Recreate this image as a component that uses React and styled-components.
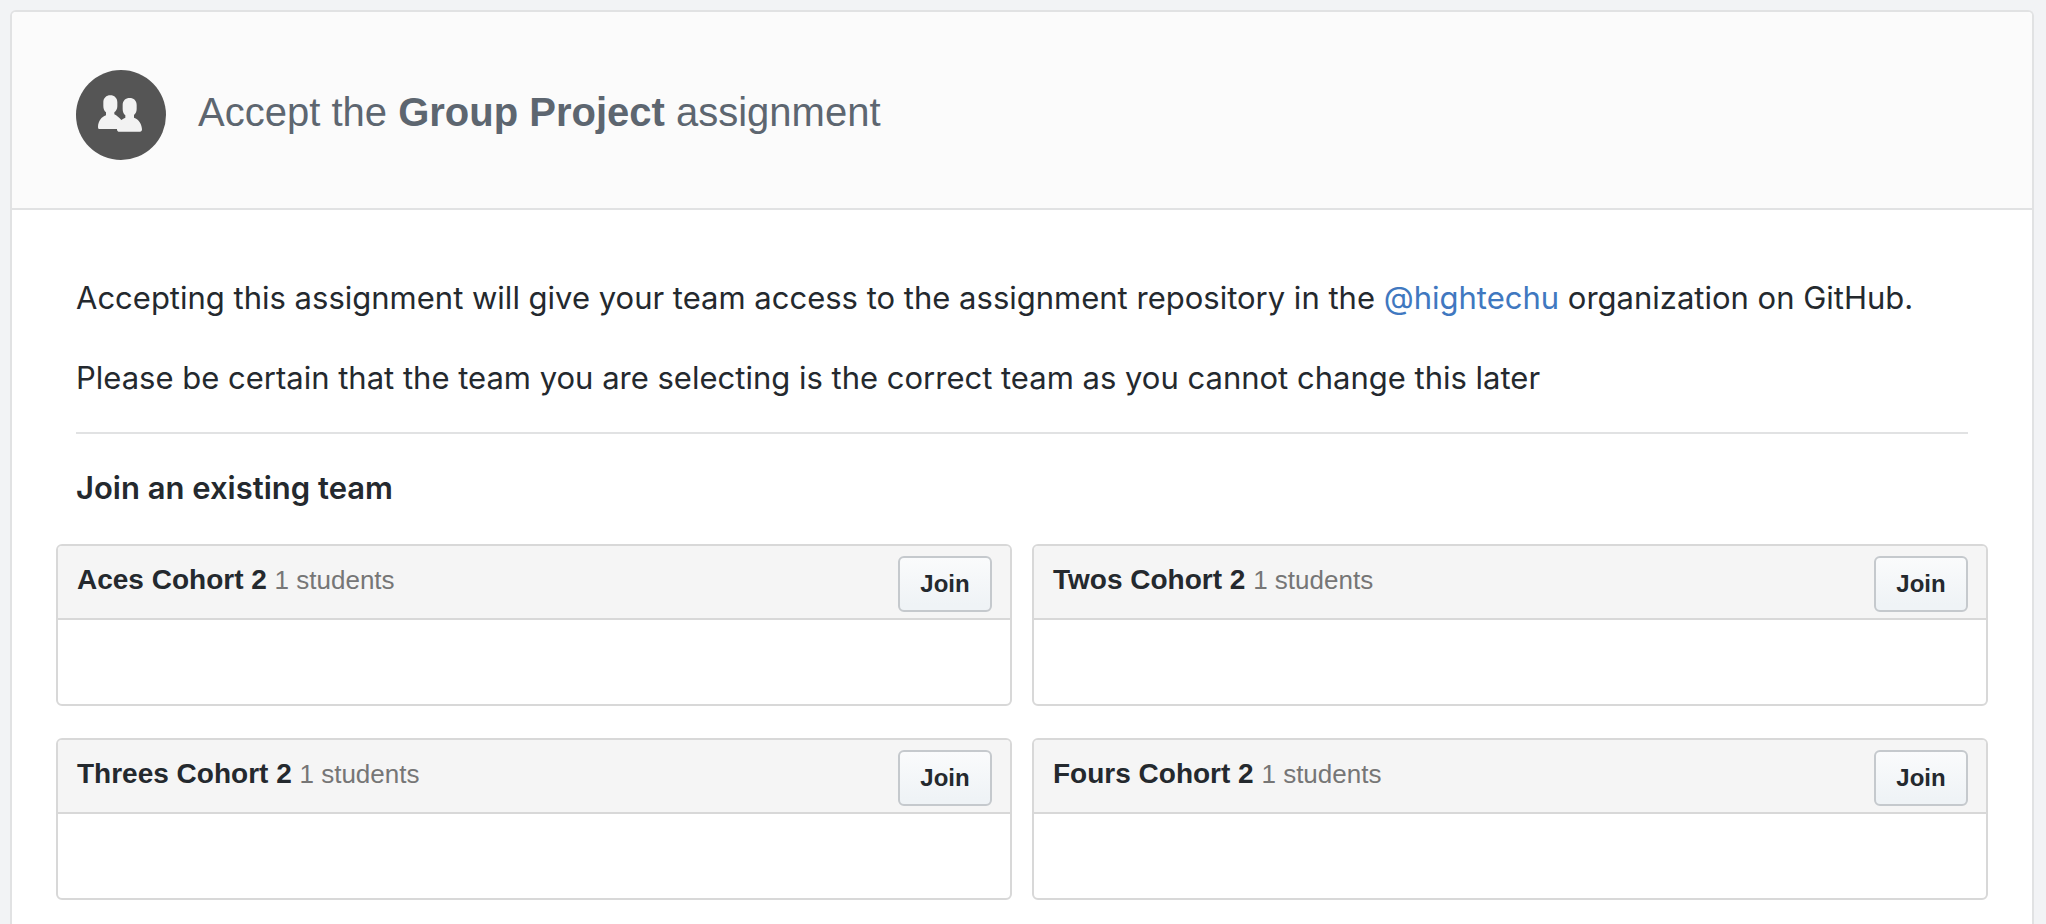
import React from "react";
import styled, { createGlobalStyle } from "styled-components";

const GlobalStyle = createGlobalStyle`
  *, *::before, *::after {
    box-sizing: border-box;
  }

  body {
    margin: 0;
    background: #f2f3f5;
    color: #24292e;
    font-family: "Liberation Sans", Arial, sans-serif;
  }
`;

const Page = styled.main`
  display: flex;
  flex-direction: column;
  min-height: 100vh;
  padding: 10px 12px 0 10px;
`;

const Panel = styled.section`
  flex: 1;
  background: #fff;
  border: 2px solid #e1e2e3;
  border-bottom: 0;
  border-radius: 6px 6px 0 0;
`;

const PanelHeader = styled.header`
  display: flex;
  align-items: flex-start;
  gap: 32px;
  padding: 58px 64px 48px;
  background: #fbfbfb;
  border-bottom: 2px solid #e1e2e3;
  border-radius: 4px 4px 0 0;
`;

const Badge = styled.svg`
  flex: none;
  width: 90px;
  height: 90px;
`;

const Title = styled.h1`
  margin: 0;
  color: #5d6670;
  font-size: 40px;
  font-weight: 400;
  line-height: 84px;
`;

const PanelBody = styled.div`
  padding: 64px 44px 20px;
`;

const Intro = styled.div`
  margin: 0 20px;
  padding-bottom: 30px;
  border-bottom: 2px solid #e1e2e3;
  font-family: Inter, sans-serif;
  font-size: 31px;
  line-height: 48px;
`;

const Paragraph = styled.p`
  margin: 0;

  & + & {
    margin-top: 32px;
  }
`;

const OrgLink = styled.a`
  color: #4078c0;
  text-decoration: none;
`;

const SectionTitle = styled.h2`
  margin: 30px 20px 32px;
  font-family: Inter, sans-serif;
  font-size: 31px;
  font-weight: 600;
  line-height: 48px;
`;

const TeamGrid = styled.div`
  display: grid;
  grid-template-columns: 1fr 1fr;
  gap: 32px 20px;
`;

const TeamCard = styled.article`
  border: 2px solid #d8d8d8;
  border-radius: 6px;
  background: #fff;
`;

const TeamHeader = styled.div`
  display: flex;
  justify-content: space-between;
  align-items: flex-start;
  padding: 10px 18px 6px 19px;
  background: #f5f5f5;
  border-bottom: 2px solid #d8d8d8;
  border-radius: 4px 4px 0 0;
`;

const TeamName = styled.h3`
  margin: 0;
  font-size: 28px;
  line-height: 48px;
`;

const StudentCount = styled.span`
  color: #767676;
  font-size: 26px;
  font-weight: 400;
`;

const TeamMembers = styled.div`
  height: 84px;
`;

const JoinButton = styled.button`
  min-width: 94px;
  padding: 0 20px;
  border: 2px solid #c5c9cd;
  border-radius: 6px;
  background: linear-gradient(#fafbfc, #eff3f6 90%);
  color: #24292e;
  font-family: inherit;
  font-size: 24px;
  font-weight: 700;
  line-height: 52px;
  cursor: pointer;
`;

const teams = [
  { name: "Aces Cohort 2", students: 1 },
  { name: "Twos Cohort 2", students: 1 },
  { name: "Threes Cohort 2", students: 1 },
  { name: "Fours Cohort 2", students: 1 },
];

function GroupBadge() {
  return (
    <Badge viewBox="48 60 270 270" aria-hidden="true">
      <circle cx="183" cy="195" r="135" fill="#555" />
      <g fill="#f2f2f2">
        <path d="M151 136C163 136 172 144 172 157V169C172 177 168 183 163 187V193C170 197 178 203 184 210C180 218 172 226 172 237H119C115 237 114 234 114 230C115 213 124 201 138 196V187C133 183 130 176 130 168V157C130 144 139 136 151 136Z" />
        <path d="M209 144C221 144 230 152 230 165V177C230 185 227 191 222 195V203C237 209 245 221 246 238C246 243 244 245 240 245H178C174 245 172 243 171 239V215L184 210C188 207 192 205 196 203V196C191 192 188 185 188 177V165C188 152 197 144 209 144Z" />
      </g>
    </Badge>
  );
}

function Team({ name, students }) {
  return (
    <TeamCard>
      <TeamHeader>
        <TeamName>
          {name} <StudentCount>{students} students</StudentCount>
        </TeamName>
        <JoinButton type="button">Join</JoinButton>
      </TeamHeader>
      <TeamMembers />
    </TeamCard>
  );
}

export default function App() {
  return (
    <>
      <GlobalStyle />
      <Page>
        <Panel>
          <PanelHeader>
            <GroupBadge />
            <Title>
              Accept the <strong>Group Project</strong> assignment
            </Title>
          </PanelHeader>
          <PanelBody>
            <Intro>
              <Paragraph>
                Accepting this assignment will give your team access to the assignment repository in the{" "}
                <OrgLink href="#hightechu">@hightechu</OrgLink> organization on GitHub.
              </Paragraph>
              <Paragraph>
                Please be certain that the team you are selecting is the correct team as you cannot change this later
              </Paragraph>
            </Intro>
            <SectionTitle>Join an existing team</SectionTitle>
            <TeamGrid>
              {teams.map((team) => (
                <Team key={team.name} {...team} />
              ))}
            </TeamGrid>
          </PanelBody>
        </Panel>
      </Page>
    </>
  );
}
